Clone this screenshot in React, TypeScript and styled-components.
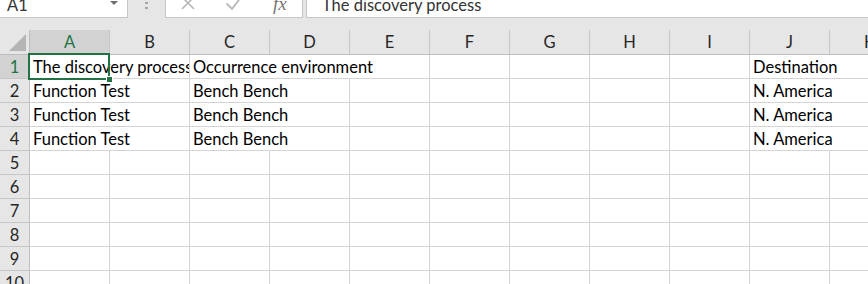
import React from 'react';
import styled, { createGlobalStyle } from 'styled-components';

const GlobalStyle = createGlobalStyle`
  html, body {
    margin: 0;
    padding: 0;
    overflow: hidden;
    background: #e6e6e6;
  }
  body {
    font-family: 'Lato', 'Liberation Sans', sans-serif;
  }
`;

const COLS = ['A', 'B', 'C', 'D', 'E', 'F', 'G', 'H', 'I', 'J', 'K'];

type Cell = { text?: string; span?: number };

const empty = (n: number): Cell[] => Array.from({ length: n }, () => ({}));

const ROWS: Cell[][] = [
  [
    { text: 'The discovery process', span: 2 },
    { text: 'Occurrence environment', span: 3 },
    ...empty(4),
    { text: 'Destination', span: 2 },
  ],
  [{ text: 'Function Test', span: 2 }, { text: 'Bench Bench', span: 2 }, ...empty(5), { text: 'N. America', span: 2 }],
  [{ text: 'Function Test', span: 2 }, { text: 'Bench Bench', span: 2 }, ...empty(5), { text: 'N. America', span: 2 }],
  [{ text: 'Function Test', span: 2 }, { text: 'Bench Bench', span: 2 }, ...empty(5), { text: 'N. America', span: 2 }],
  empty(11),
  empty(11),
  empty(11),
  empty(11),
  empty(11),
  empty(11),
];

const Window = styled.div`
  width: 868px;
  height: 284px;
  overflow: hidden;
  background: #e6e6e6;
`;

/* formula bar, its top is cut off by the window edge */
const FormulaBar = styled.div`
  display: flex;
  height: 26px;
  margin-top: -8px;
  margin-bottom: 12px;
`;

const NameBox = styled.div`
  box-sizing: border-box;
  width: 128px;
  display: flex;
  align-items: center;
  justify-content: space-between;
  padding: 0 9px 0 7px;
  background: #fff;
  border-right: 1px solid #c6c6c6;
  border-bottom: 1px solid #c6c6c6;
  font-size: 16.5px;
  color: #333;
`;

const Caret = styled.span`
  width: 0;
  height: 0;
  margin-top: -3px;
  border-left: 4px solid transparent;
  border-right: 4px solid transparent;
  border-top: 4px solid #6f6f6f;
`;

const Grip = styled.div`
  width: 37px;
  display: flex;
  flex-direction: column;
  align-items: center;
  justify-content: center;
  gap: 3px;

  span {
    width: 3px;
    height: 2px;
    background: #a6a6a6;
  }
`;

const FuncBox = styled.div`
  box-sizing: border-box;
  width: 138px;
  display: flex;
  align-items: center;
  padding-left: 14px;
  background: #fff;
  border: 1px solid #c6c6c6;
  border-top: none;

  svg {
    flex: none;
    margin-top: -4px;
  }
`;

const Fx = styled.span`
  margin-left: 30px;
  font-family: 'Liberation Serif', serif;
  font-style: italic;
  font-size: 19px;
  color: #767676;
  margin-top: -2px;
`;

const FormulaInput = styled.div`
  flex: 1;
  margin-left: 3px;
  display: flex;
  align-items: center;
  padding-left: 15px;
  background: #fff;
  border-left: 1px solid #c6c6c6;
  border-bottom: 1px solid #c6c6c6;
  font-size: 16.5px;
  color: #333;
`;

const SheetWrap = styled.div`
  position: relative;
`;

const Sheet = styled.div`
  display: grid;
  grid-template-columns: 30px repeat(11, 80px);
  grid-template-rows: 25px;
  grid-auto-rows: 24px;
  background: #fff;
`;

const Corner = styled.div`
  box-sizing: border-box;
  background: #e6e6e6;
  border-right: 1px solid #bdbdbd;
  border-bottom: 1px solid #bdbdbd;
  display: flex;
  align-items: flex-end;
  justify-content: flex-end;
  padding: 0 3px 3px 0;
`;

const ColHead = styled.div<{ $active?: boolean }>`
  box-sizing: border-box;
  display: flex;
  align-items: center;
  justify-content: center;
  background: ${(p) => (p.$active ? '#d2d2d2' : '#e6e6e6')};
  color: ${(p) => (p.$active ? '#217346' : '#262626')};
  border-right: 1px solid #c6c6c6;
  border-bottom: 1px solid #bdbdbd;
  font-size: 16.5px;
`;

const RowHead = styled.div<{ $active?: boolean }>`
  box-sizing: border-box;
  display: flex;
  align-items: center;
  justify-content: center;
  background: ${(p) => (p.$active ? '#d2d2d2' : '#e6e6e6')};
  color: ${(p) => (p.$active ? '#217346' : '#262626')};
  border-right: 1px solid #bdbdbd;
  border-bottom: 1px solid #c6c6c6;
  font-size: 16.5px;
`;

const DataCell = styled.div<{ $span: number }>`
  box-sizing: border-box;
  grid-column: span ${(p) => p.$span};
  padding: 0 3px;
  border-right: 1px solid #d4d4d4;
  border-bottom: 1px solid #d4d4d4;
  overflow: hidden;
  white-space: nowrap;
  line-height: 24px;
  font-size: 16.5px;
  color: #000;
`;

const Selection = styled.div`
  position: absolute;
  box-sizing: border-box;
  left: 28px;
  top: 23px;
  width: 82px;
  height: 27px;
  border: 2px solid #217346;
  pointer-events: none;
`;

const FillHandle = styled.div`
  position: absolute;
  right: -5px;
  bottom: -5px;
  width: 5px;
  height: 5px;
  background: #217346;
  border: 1px solid #fff;
`;

const CloseIcon = () => (
  <svg width="16" height="16" viewBox="0 0 16 16">
    <path d="M2 2 L14 14 M14 2 L2 14" stroke="#b8b8b8" strokeWidth="1.6" fill="none" />
  </svg>
);

const CheckIcon = () => (
  <svg width="18" height="16" viewBox="0 0 18 16" style={{ marginLeft: 29 }}>
    <path d="M1.5 8.5 L7 14 L16.5 1.5" stroke="#b8b8b8" strokeWidth="1.8" fill="none" />
  </svg>
);

const App = () => (
  <>
    <GlobalStyle />
    <Window>
      <FormulaBar>
        <NameBox>
          <span>A1</span>
          <Caret />
        </NameBox>
        <Grip>
          <span />
          <span />
        </Grip>
        <FuncBox>
          <CloseIcon />
          <CheckIcon />
          <Fx>fx</Fx>
        </FuncBox>
        <FormulaInput>The discovery process</FormulaInput>
      </FormulaBar>

      <SheetWrap>
        <Sheet>
          <Corner>
            <svg width="17" height="17" viewBox="0 0 17 17">
              <polygon points="17,0 17,17 0,17" fill="#b5b5b5" />
            </svg>
          </Corner>
          {COLS.map((c) => (
            <ColHead key={c} $active={c === 'A'}>
              {c}
            </ColHead>
          ))}
          {ROWS.map((row, r) => (
            <React.Fragment key={r}>
              <RowHead $active={r === 0}>{r + 1}</RowHead>
              {row.map((cell, i) => (
                <DataCell key={i} $span={cell.span ?? 1}>
                  {cell.text}
                </DataCell>
              ))}
            </React.Fragment>
          ))}
        </Sheet>
        <Selection>
          <FillHandle />
        </Selection>
      </SheetWrap>
    </Window>
  </>
);

export default App;
